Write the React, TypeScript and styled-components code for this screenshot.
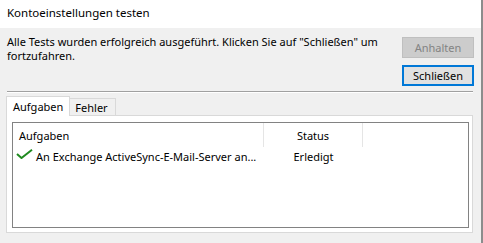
import styled, { createGlobalStyle } from "styled-components"

const GlobalStyle = createGlobalStyle`
	html, body {
		margin: 0;
		padding: 0;
		background: #f0f0f0;
	}
	body {
		font-family: "Noto Sans", "Open Sans", sans-serif;
		font-size: 11px;
		color: #000000;
	}
	* {
		box-sizing: border-box;
	}
`

const Window = styled.div`
	width: 483px;
	height: 243px;
	display: flex;
	flex-direction: column;
	background: #f0f0f0;
	border-right: 2px solid #8c8c8c;
	overflow: hidden;
`
const TitleBar = styled.div`
	height: 28px;
	flex-shrink: 0;
	background: #ffffff;
	padding-left: 7px;
	font-size: 11.5px;
	line-height: 26px;
`
const Body = styled.div`
	flex: 1;
	display: flex;
	flex-direction: column;
	padding: 7px 7px 0 7px;
`
const TopRow = styled.div`
	display: flex;
	align-items: flex-start;
	justify-content: space-between;
`
const Message = styled.p`
	margin: 0;
	line-height: 14px;
	white-space: nowrap;
`
const ButtonColumn = styled.div`
	display: flex;
	flex-direction: column;
	gap: 7px;
	margin-top: 2px;
`
const DialogButton = styled.button<{ $default?: boolean }>`
	width: 72px;
	height: 21px;
	padding: 0;
	font-family: inherit;
	font-size: 11px;
	line-height: 17px;
	background: ${(p) => (p.$default ? "#e1e1e1" : "#cccccc")};
	color: ${(p) => (p.$default ? "#000000" : "#838383")};
	border: ${(p) => (p.$default ? "2px solid #0078d7" : "1px solid #bfbfbf")};
`
const Separator = styled.hr`
	margin: 5px 1px 0 0;
	height: 2px;
	border: none;
	border-top: 1px solid #a0a0a0;
	border-bottom: 1px solid #ffffff;
`
const TabArea = styled.div`
	margin: 3px 1px 0 -1px;
	display: flex;
	flex-direction: column;
`
const TabStrip = styled.div`
	display: flex;
	align-items: flex-end;
	height: 19px;
	position: relative;
	z-index: 1;
`
const Tab = styled.div<{ $active?: boolean }>`
	height: ${(p) => (p.$active ? "20px" : "17px")};
	margin-bottom: ${(p) => (p.$active ? "-1px" : "0")};
	padding: ${(p) => (p.$active ? "2px 6px 0 6px" : "1px 7px 0 5px")};
	line-height: 16px;
	background: ${(p) => (p.$active ? "#ffffff" : "#f0f0f0")};
	border: 1px solid #d9d9d9;
	border-bottom: none;
	border-left: ${(p) => (p.$active ? "1px solid #d9d9d9" : "none")};
`
const TabPanel = styled.div`
	height: 118px;
	background: #ffffff;
	border: 1px solid #d9d9d9;
	padding: 6px 3px 4px 5px;
`
const ListBox = styled.div`
	height: 100%;
	border: 1px solid #828282;
	background: #ffffff;
`
const GridRow = styled.div<{ $height: number }>`
	display: grid;
	grid-template-columns: 251px 99px 1fr;
	height: ${(p) => p.$height}px;
	line-height: ${(p) => p.$height}px;
`
const HeaderCell = styled.div<{ $center?: boolean; $divider?: boolean }>`
	padding-top: 1px;
	line-height: 23px;
	padding-left: ${(p) => (p.$center ? "0" : "6px")};
	text-align: ${(p) => (p.$center ? "center" : "left")};
	border-right: ${(p) => (p.$divider ? "1px solid #e5e5e5" : "none")};
`
const TaskCell = styled.div`
	display: flex;
	align-items: flex-start;
	gap: 3px;
	padding-left: 3px;
	white-space: nowrap;
	overflow: hidden;
`
const StatusCell = styled.div`
	text-align: center;
`
const CheckIcon = styled.svg`
	flex-shrink: 0;
	margin-top: 2px;
`

function CheckMark() {
	return (
		<CheckIcon width="17" height="10" viewBox="0 0 17 10">
			<path d="M1 5 L5.5 9 L16 0.8" fill="none" stroke="#1f8a1f" strokeWidth="2" />
		</CheckIcon>
	)
}

export default function App() {
	return (
		<>
			<GlobalStyle />
			<Window>
				<TitleBar>Kontoeinstellungen testen</TitleBar>
				<Body>
					<TopRow>
						<Message>
							Alle Tests wurden erfolgreich ausgeführt. Klicken Sie auf "Schließen" um
							<br />
							fortzufahren.
						</Message>
						<ButtonColumn>
							<DialogButton disabled>Anhalten</DialogButton>
							<DialogButton $default>Schließen</DialogButton>
						</ButtonColumn>
					</TopRow>
					<Separator />
					<TabArea>
						<TabStrip>
							<Tab $active>Aufgaben</Tab>
							<Tab>Fehler</Tab>
						</TabStrip>
						<TabPanel>
							<ListBox>
								<GridRow $height={24}>
									<HeaderCell $divider>Aufgaben</HeaderCell>
									<HeaderCell $divider $center>Status</HeaderCell>
									<HeaderCell />
								</GridRow>
								<GridRow $height={20}>
									<TaskCell>
										<CheckMark />
										An Exchange ActiveSync-E-Mail-Server an...
									</TaskCell>
									<StatusCell>Erledigt</StatusCell>
									<div />
								</GridRow>
							</ListBox>
						</TabPanel>
					</TabArea>
				</Body>
			</Window>
		</>
	)
}
